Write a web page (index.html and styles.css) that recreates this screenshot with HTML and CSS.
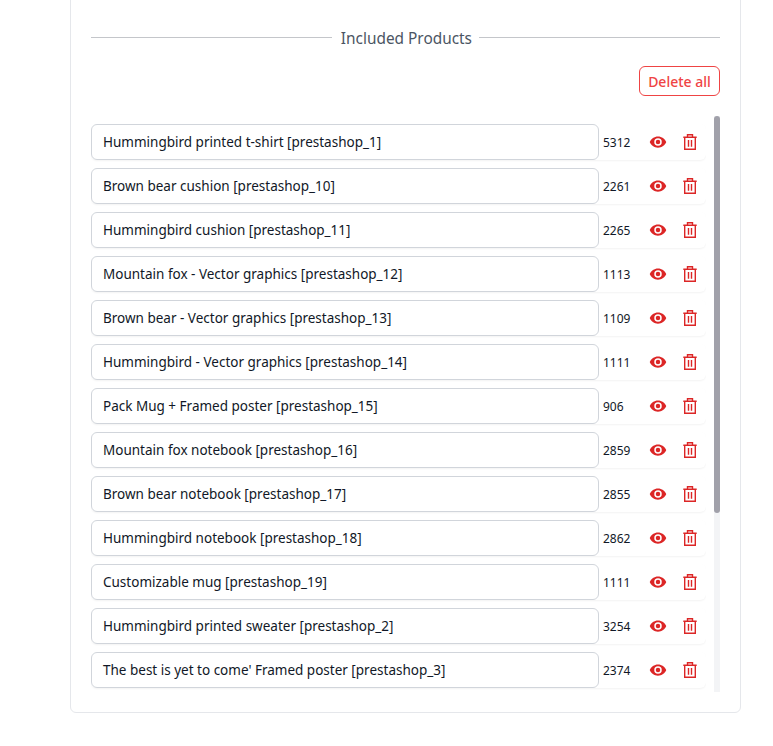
FILE: index.html
```html
<!DOCTYPE html>
<html lang="en">
<head>
<meta charset="utf-8">
<title>Included Products</title>
<link rel="stylesheet" href="styles.css">
</head>
<body>
<svg class="defs" width="0" height="0" aria-hidden="true">
  <symbol id="eye" viewBox="0 0 24 24"><path fill="currentColor" fill-rule="evenodd" d="M12 4.500C7 4.500 2.700 7.600 1 12c1.700 4.400 6 7.500 11 7.500s9.300-3.100 11-7.500c-1.700-4.400-6-7.500-11-7.500zm0 12.500a5 5 0 1 1 0-10 5 5 0 0 1 0 10zm0-8a3 3 0 1 0 0 6 3 3 0 0 0 0-6z"/></symbol>
  <symbol id="trash" viewBox="0 0 14 16"><path fill="none" stroke="currentColor" stroke-width="1.400" d="M.3 3.200h13.400M1.700 3.200v12.100h10.600V3.200M4.500 3.200V.8h5v2.400M5.500 6v6.800M8.500 6v6.800"/></symbol>
</svg>
<main class="card">
  <div class="divider"><span class="divider-label">Included Products</span></div>
  <div class="actions"><button class="delete-all" type="button">Delete all</button></div>
  <div class="list-wrap">
    <div class="list">
      <div class="row"><div class="name">Hummingbird printed t-shirt [prestashop_1]</div><span class="stock">5312</span><span class="icon eye"><svg><use href="#eye"/></svg></span><span class="icon trash"><svg><use href="#trash"/></svg></span></div>
      <div class="row"><div class="name">Brown bear cushion [prestashop_10]</div><span class="stock">2261</span><span class="icon eye"><svg><use href="#eye"/></svg></span><span class="icon trash"><svg><use href="#trash"/></svg></span></div>
      <div class="row"><div class="name">Hummingbird cushion [prestashop_11]</div><span class="stock">2265</span><span class="icon eye"><svg><use href="#eye"/></svg></span><span class="icon trash"><svg><use href="#trash"/></svg></span></div>
      <div class="row"><div class="name">Mountain fox - Vector graphics [prestashop_12]</div><span class="stock">1113</span><span class="icon eye"><svg><use href="#eye"/></svg></span><span class="icon trash"><svg><use href="#trash"/></svg></span></div>
      <div class="row"><div class="name">Brown bear - Vector graphics [prestashop_13]</div><span class="stock">1109</span><span class="icon eye"><svg><use href="#eye"/></svg></span><span class="icon trash"><svg><use href="#trash"/></svg></span></div>
      <div class="row"><div class="name">Hummingbird - Vector graphics [prestashop_14]</div><span class="stock">1111</span><span class="icon eye"><svg><use href="#eye"/></svg></span><span class="icon trash"><svg><use href="#trash"/></svg></span></div>
      <div class="row"><div class="name">Pack Mug + Framed poster [prestashop_15]</div><span class="stock">906</span><span class="icon eye"><svg><use href="#eye"/></svg></span><span class="icon trash"><svg><use href="#trash"/></svg></span></div>
      <div class="row"><div class="name">Mountain fox notebook [prestashop_16]</div><span class="stock">2859</span><span class="icon eye"><svg><use href="#eye"/></svg></span><span class="icon trash"><svg><use href="#trash"/></svg></span></div>
      <div class="row"><div class="name">Brown bear notebook [prestashop_17]</div><span class="stock">2855</span><span class="icon eye"><svg><use href="#eye"/></svg></span><span class="icon trash"><svg><use href="#trash"/></svg></span></div>
      <div class="row"><div class="name">Hummingbird notebook [prestashop_18]</div><span class="stock">2862</span><span class="icon eye"><svg><use href="#eye"/></svg></span><span class="icon trash"><svg><use href="#trash"/></svg></span></div>
      <div class="row"><div class="name">Customizable mug [prestashop_19]</div><span class="stock">1111</span><span class="icon eye"><svg><use href="#eye"/></svg></span><span class="icon trash"><svg><use href="#trash"/></svg></span></div>
      <div class="row"><div class="name">Hummingbird printed sweater [prestashop_2]</div><span class="stock">3254</span><span class="icon eye"><svg><use href="#eye"/></svg></span><span class="icon trash"><svg><use href="#trash"/></svg></span></div>
      <div class="row"><div class="name">The best is yet to come' Framed poster [prestashop_3]</div><span class="stock">2374</span><span class="icon eye"><svg><use href="#eye"/></svg></span><span class="icon trash"><svg><use href="#trash"/></svg></span></div>
    </div>
    <div class="scrollbar"><div class="thumb"></div></div>
  </div>
</main>
</body>
</html>
```
FILE: styles.css
```css
* { box-sizing: border-box; }
html, body { margin: 0; height: 100%; background: #fff; overflow: hidden; }
body { font-family: "Noto Sans", "Open Sans", sans-serif; color: #111827; }
.defs { display: block; height: 0; }
.card {
  width: 671px;
  height: 733px;
  margin: -20px 0 0 70px;
  padding: 47px 20px 20px;
  border: 1px solid #e5e7eb;
  border-radius: 6px;
  background: #fff;
}
.divider { display: flex; align-items: center; gap: 9px; height: 20px; font-size: 15.4px; color: #4b5563; }
.divider::before, .divider::after { content: ""; height: 1px; margin-top: -1px; background: #c4c6ca; }
.divider::before { flex: 1 1 auto; }
.divider::after { flex: 0 0 241px; margin-left: -2px; }
.actions { display: flex; justify-content: flex-end; margin-top: 18px; }
.delete-all {
  width: 81px;
  height: 30px;
  padding: 0;
  font: 500 14px "Noto Sans", sans-serif;
  color: #ef4444;
  background: #fff;
  border: 1px solid #ef4444;
  border-radius: 6px;
}
.list-wrap { display: flex; justify-content: space-between; height: 576px; margin-top: 20px; }
.list { flex: 0 0 615px; padding-top: 8px; overflow: hidden; }
.scrollbar { flex: 0 0 6px; background: #f3f4f6; }
.thumb { height: 397px; background: #a1a1aa; border-radius: 3px; }
.row {
  display: flex;
  align-items: center;
  height: 36px;
  margin-bottom: 8px;
  border-radius: 6px;
  box-shadow: 0 1px 2px rgba(0, 0, 0, 0.05);
}
.name {
  flex: 0 0 508px;
  height: 36px;
  padding: 0 11px;
  line-height: 34px;
  font-size: 13.5px;
  color: #111827;
  border: 1px solid #d1d5db;
  border-radius: 6px;
  background: #fff;
  white-space: nowrap;
}
.stock { flex: 0 0 50px; padding-left: 4px; font-size: 12px; color: #111827; }
.icon { display: flex; justify-content: center; align-items: center; color: #dc2626; }
.icon svg { display: block; }
.eye { flex: 0 0 18px; }
.eye svg { width: 18px; height: 18px; }
.trash { flex: 0 0 16px; margin-left: 15px; }
.trash svg { width: 14px; height: 16px; }
```
